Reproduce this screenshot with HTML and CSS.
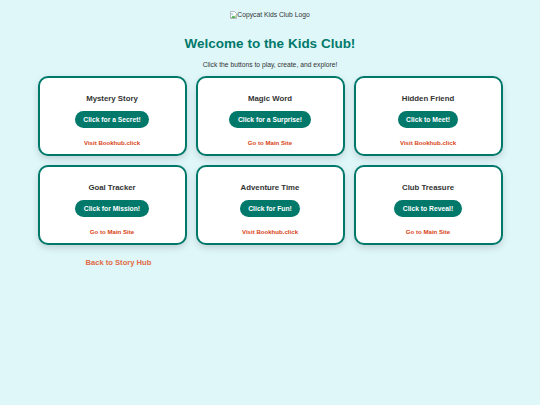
FILE: index.html
```html
<!DOCTYPE html>
<html lang="en">
<head>
<meta charset="utf-8">
<title>Kids Club</title>
<link rel="stylesheet" href="styles.css">
</head>
<body>
<header class="header">
  <div class="logo"><svg class="broken" width="7" height="8" viewBox="0 0 7 8"><path d="M0.5 0.5h4l2 2v5h-6z" fill="#fff" stroke="#9e9e9e" stroke-width="0.7"/><path d="M1 7l2-2.5 1.2 1.2L5.5 4V7z" fill="#4caf50"/><circle cx="2" cy="3" r="0.8" fill="#64b5f6"/></svg><span>Copycat Kids Club Logo</span></div>
  <h1 class="title">Welcome to the Kids Club!</h1>
  <p class="subtitle">Click the buttons to play, create, and explore!</p>
</header>
<main class="wrap">
  <div class="grid">
    <div class="card"><h2 class="card-title">Mystery Story</h2><a class="btn">Click for a Secret!</a><a class="card-link">Visit Bookhub.click</a></div>
    <div class="card"><h2 class="card-title">Magic Word</h2><a class="btn">Click for a Surprise!</a><a class="card-link">Go to Main Site</a></div>
    <div class="card"><h2 class="card-title">Hidden Friend</h2><a class="btn">Click to Meet!</a><a class="card-link">Visit Bookhub.click</a></div>
    <div class="card"><h2 class="card-title">Goal Tracker</h2><a class="btn">Click for Mission!</a><a class="card-link">Go to Main Site</a></div>
    <div class="card"><h2 class="card-title">Adventure Time</h2><a class="btn">Click for Fun!</a><a class="card-link">Visit Bookhub.click</a></div>
    <div class="card"><h2 class="card-title">Club Treasure</h2><a class="btn">Click to Reveal!</a><a class="card-link">Go to Main Site</a></div>
  </div>
  <div class="back-row"><a class="back">Back to Story Hub</a></div>
</main>
</body>
</html>
```
FILE: styles.css
```css
html, body {
  margin: 0;
  padding: 0;
}
body {
  background: #e0f7fa;
  font-family: "Liberation Sans", Arial, sans-serif;
  color: #333;
  width: 540px;
  height: 405px;
  overflow: hidden;
}
.header {
  text-align: center;
  padding-top: 11px;
}
.logo {
  display: flex;
  justify-content: center;
  align-items: center;
  font-size: 6.75px;
  line-height: 8px;
  height: 8px;
  color: #333;
}
.broken {
  display: block;
}
.title {
  margin: 17px 0 0;
  font-size: 13.5px;
  line-height: 16px;
  color: #00796b;
  font-weight: bold;
}
.subtitle {
  margin: 9px 0 0;
  font-size: 6.75px;
  line-height: 8px;
  color: #333;
}
.wrap {
  width: 465px;
  margin: 7px auto 0;
}
.grid {
  display: grid;
  grid-template-columns: repeat(3, 149px);
  gap: 9px;
}
.card {
  box-sizing: border-box;
  height: 80px;
  background: #fff;
  border: 2px solid #00796b;
  border-radius: 10px;
  box-shadow: 0 3px 7px rgba(0, 0, 0, 0.15);
  padding-top: 16px;
  display: flex;
  flex-direction: column;
  align-items: center;
}
.card-title {
  margin: 0;
  font-size: 7.8px;
  line-height: 9px;
  font-weight: bold;
  color: #333;
}
.btn {
  margin-top: 8px;
  display: inline-block;
  background: #00796b;
  color: #fff;
  font-weight: bold;
  font-size: 6.75px;
  line-height: 7.8px;
  padding: 4.8px 8.5px;
  border-radius: 10px;
}
.card-link {
  margin-top: 10.2px;
  font-size: 6.1px;
  line-height: 7px;
  font-weight: bold;
  color: #d84315;
}
.back-row {
  margin-top: 14px;
  padding-left: 48px;
  font-size: 7.6px;
  line-height: 8px;
}
.back {
  font-weight: bold;
  color: #e06a45;
}
```
